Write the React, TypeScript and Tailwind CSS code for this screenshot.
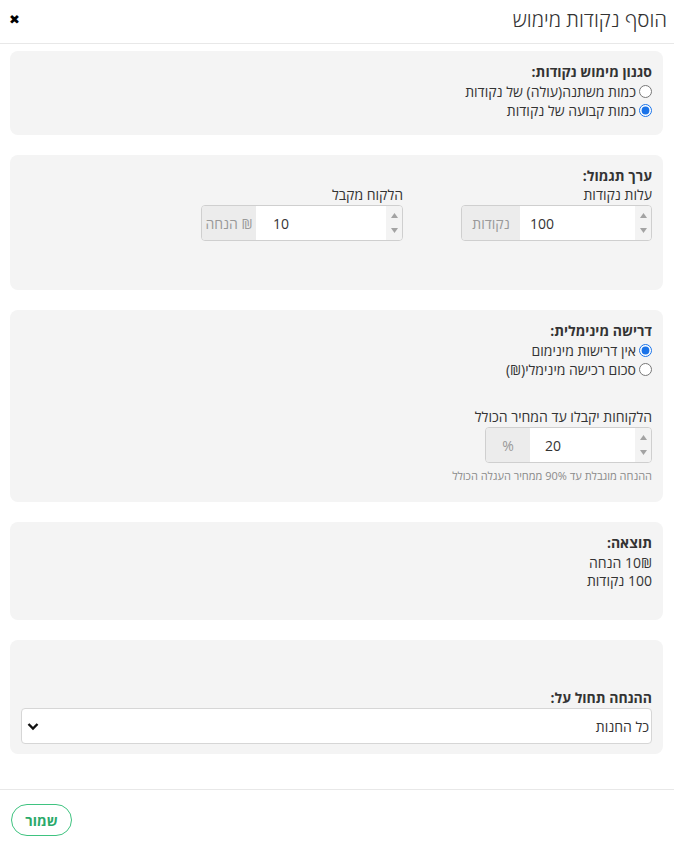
import React from "react";

const font = { fontFamily: '"Open Sans", "DejaVu Sans", sans-serif' };

function Spinner() {
  return (
    <div className="flex h-full w-[16px] flex-col items-center justify-between bg-[#f3f3f3] py-[7px]">
      <svg width="7" height="5" viewBox="0 0 7 5"><path d="M0 5 L3.5 0 L7 5 Z" fill="#a3a3a3" /></svg>
      <svg width="7" height="5" viewBox="0 0 7 5"><path d="M0 0 L3.5 5 L7 0 Z" fill="#a3a3a3" /></svg>
    </div>
  );
}

function NumGroup({ value, addon, whiteW, addonW, padL }: { value: string; addon: string; whiteW: string; addonW: string; padL: string }) {
  return (
    <div className="flex h-[36px] flex-row overflow-hidden rounded-[4px] border border-[#cfcfcf]">
      <Spinner />
      <div className={`flex h-full items-center bg-white ${whiteW} ${padL}`} dir="ltr">
        <span className="text-[14px] text-[#333]">{value}</span>
      </div>
      <div className={`flex h-full items-center justify-center bg-[#ececec] text-[14px] text-[#999] ${addonW}`}>{addon}</div>
    </div>
  );
}

function Radio({ checked, label }: { checked: boolean; label: string }) {
  return (
    <label className="flex h-[19px] flex-row items-center gap-[3px] text-[14px] text-[#333]">
      <input type="radio" defaultChecked={checked} name={label} className="m-0 h-[13px] w-[13px] accent-[#1a73e8]" />
      <span>{label}</span>
    </label>
  );
}

export default function App() {
  return (
    <div dir="rtl" style={font} className="min-h-[845px] w-[674px] bg-white text-[#333]">
      <header className="flex h-[44px] flex-row items-center justify-between border-b border-[#e8e8e8] pl-[9px] pr-[7px]">
        <h1 className="text-[20.5px] font-light leading-none text-[#333] -mt-[5px]">הוסף נקודות מימוש</h1>
        <span className="-mt-[5px] text-[13px] font-bold leading-none text-black">✖</span>
      </header>

      <main className="flex flex-col gap-[20px] pl-[10px] pr-[11px] pt-[7px]">
        <section className="rounded-[8px] bg-[#f4f4f4] px-[11px] pb-[15px] pt-[11px]">
          <div className="text-[14px] font-bold leading-5">סגנון מימוש נקודות:</div>
          <Radio checked={false} label="כמות משתנה(עולה) של נקודות" />
          <Radio checked={true} label="כמות קבועה של נקודות" />
        </section>

        <section className="rounded-[8px] bg-[#f4f4f4] px-[11px] pb-[49px] pt-[11px]">
          <div className="text-[14px] font-bold leading-5">ערך תגמול:</div>
          <div className="flex flex-row gap-[58px]">
            <div className="flex flex-col">
              <div className="h-[19px] text-[14px] leading-[18px]">עלות נקודות</div>
              <NumGroup value="100" addon="נקודות" whiteW="w-[115px]" addonW="w-[58px]" padL="pl-[10px]" />
            </div>
            <div className="flex flex-col">
              <div className="h-[19px] text-[14px] leading-[18px]">הלקוח מקבל</div>
              <NumGroup value="10" addon="₪ הנחה" whiteW="w-[130px]" addonW="w-[54px]" padL="pl-[17px]" />
            </div>
          </div>
        </section>

        <section className="rounded-[8px] bg-[#f4f4f4] px-[11px] pb-[19px] pt-[11px]">
          <div className="text-[14px] font-bold leading-5">דרישה מינימלית:</div>
          <Radio checked={true} label="אין דרישות מינימום" />
          <Radio checked={false} label="סכום רכישה מינימלי(₪)" />
          <div className="mt-[29px] h-[19px] text-[14px] leading-[18px]">הלקוחות יקבלו עד המחיר הכולל</div>
          <div className="flex flex-row">
            <NumGroup value="20" addon="%" whiteW="w-[105px]" addonW="w-[44px]" padL="pl-[15px]" />
          </div>
          <div className="mt-[6px] text-[11px] leading-[14px] text-[#8a8a8a]">ההנחה מוגבלת עד 90% ממחיר העגלה הכולל</div>
        </section>

        <section className="rounded-[8px] bg-[#f4f4f4] px-[11px] pb-[30px] pt-[11px]">
          <div className="text-[14px] font-bold leading-5">תוצאה:</div>
          <div className="text-[14px] leading-[19px]">10₪ הנחה</div>
          <div className="text-[14px] leading-[18px]">100 נקודות</div>
        </section>

        <section className="rounded-[8px] bg-[#f4f4f4] px-[11px] pb-[10px] pt-[48px]">
          <div className="text-[14px] font-bold leading-5">ההנחה תחול על:</div>
          <div className="flex h-[36px] flex-row items-center justify-between rounded-[4px] border border-[#d6d6d6] bg-white pl-[5px] pr-[2px]">
            <span className="text-[14px] text-[#333]">כל החנות</span>
            <svg width="12" height="9" viewBox="0 0 12 9">
              <path d="M1.5 2 L6 6.5 L10.5 2" fill="none" stroke="#111" strokeWidth="2.4" />
            </svg>
          </div>
        </section>
      </main>

      <footer className="mt-[35px] border-t border-[#e8e8e8] pl-[11px] pt-[14px]">
        <div className="flex flex-row justify-end">
          <button className="flex h-[32px] w-[61px] items-center justify-center rounded-full border border-[#3fc380] bg-white text-[14px] font-bold text-[#2aa96a]">
            שמור
          </button>
        </div>
      </footer>
    </div>
  );
}
